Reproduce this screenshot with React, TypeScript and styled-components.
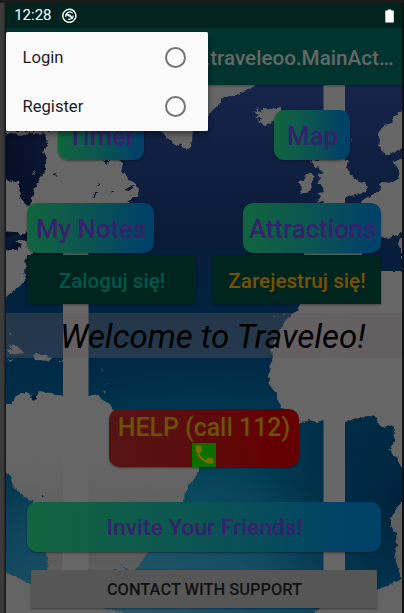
import React from 'react';
import styled, { createGlobalStyle } from 'styled-components';

const GlobalStyle = createGlobalStyle`
  * { box-sizing: border-box; }
  body { margin: 0; overflow: hidden; background: #101010; font-family: Roboto, sans-serif; }
  button { font-family: inherit; }
`;

const Device = styled.div`
  height: 613px;
  width: 404px;
  padding: 3px 2px 0 6px;
  background: linear-gradient(90deg, #3a3a3a 0, #3c3c3c 3px, #222 5px, #111 6px, #111 100%);
  box-shadow: inset 0 3px #1b1b1b;
  overflow: hidden;
`;

const Screen = styled.main`
  position: relative;
  display: flex;
  flex-direction: column;
  height: 610px;
  overflow: hidden;
`;

const StatusBar = styled.header`
  display: flex;
  align-items: center;
  flex: 0 0 25px;
  padding: 0 8px 0 8.2px;
  background: #00231d;
  color: #fff;
  font-size: 15px;
  line-height: 25px;
`;

const StatusIcon = styled.svg`
  width: 15px;
  height: 15px;
  margin-left: 10.6px;
`;

const Battery = styled.svg`
  width: 9px;
  height: 14px;
  margin-left: auto;
`;

const AppBar = styled.div`
  position: relative;
  display: flex;
  align-items: center;
  justify-content: flex-end;
  flex: 0 0 57px;
  padding: 2px 8.5px 0 0;
  background: #00352f;
  box-shadow: 0 1px 2px rgba(0, 0, 0, 0.35);
  z-index: 1;
  color: #676767;
  font-size: 20.65px;
  font-weight: 500;
  white-space: nowrap;
`;

const Content = styled.section`
  position: relative;
  display: flex;
  flex-direction: column;
  flex: 0 0 528px;
  background:
    radial-gradient(ellipse 270px 170px at 130px 535px, rgba(50, 92, 112, 0.85), rgba(30, 80, 100, 0) 100%),
    radial-gradient(ellipse 210px 150px at 195px 425px, rgba(0, 74, 94, 0.75), rgba(0, 66, 88, 0) 100%),
    linear-gradient(180deg, #16244a 0, #0f1f40 80px, #0b1c3a 150px, #02203c 200px, #002a46 280px, #003049 330px, #00344d 400px, #003c55 450px, #003d56 528px);
`;

const WorldMap = styled.svg`
  position: absolute;
  inset: 0;
  width: 396px;
  height: 528px;
`;

const Row = styled.div<{ $top: number; $left: number; $right: number }>`
  position: relative;
  display: flex;
  justify-content: space-between;
  margin: ${p => p.$top}px ${p => p.$right}px 0 ${p => p.$left}px;
`;

const GradientButton = styled.button<{ $width: number; $size?: number }>`
  width: ${p => p.$width}px;
  height: 50px;
  padding: 2px 0 0 1px;
  border: 0;
  border-radius: 10px;
  background: linear-gradient(90deg, #11653d, #0b5452 50%, #004168 92%);
  box-shadow: 0 1px 2px rgba(0, 0, 0, 0.4);
  color: #37206c;
  font-size: ${p => p.$size ?? 25.8}px;
  font-weight: 500;
  white-space: nowrap;
`;

const AuthButton = styled.button<{ $color: string }>`
  width: 169px;
  height: 49px;
  padding: 2px 0 0 1px;
  border: 0;
  background: #00251e;
  box-shadow: 0 1px 2px rgba(0, 0, 0, 0.35);
  color: ${p => p.$color};
  font-size: 20.7px;
  font-weight: 500;
`;

const Welcome = styled.h1`
  position: relative;
  height: 45px;
  margin: 9px 0 0;
  padding-left: 54px;
  background: rgba(97, 87, 91, 0.37);
  color: #000;
  font-size: 33px;
  font-style: italic;
  font-weight: 400;
  line-height: 48px;
  white-space: nowrap;
`;

const HelpButton = styled.button`
  position: relative;
  display: flex;
  flex-direction: column;
  align-items: center;
  align-self: flex-start;
  width: 190px;
  height: 58px;
  margin: 51.4px 0 0 103px;
  padding: 4px 0 0;
  border: 0;
  border-radius: 10px;
  background: linear-gradient(90deg, #551414, #5c0c0e 45%, #660000 90%);
  box-shadow: 0 1px 2px rgba(0, 0, 0, 0.4);
  color: #6b5206;
  font-size: 24.9px;
  font-weight: 500;
  line-height: 29.6px;
  white-space: nowrap;
`;

const PhoneIcon = styled.svg`
  width: 24.5px;
  height: 24px;
  flex: none;
  background: #0d6e00;
`;

const SupportButton = styled.button`
  position: relative;
  height: 38px;
  margin: 18.5px 25px 0;
  padding: 1px 0 0 1px;
  border: 0;
  border-radius: 1px;
  background: #565656;
  box-shadow: 0 1px 2px rgba(0, 0, 0, 0.4);
  color: #111;
  font-size: 16.45px;
  font-weight: 500;
`;

const Menu = styled.ul`
  position: absolute;
  z-index: 2;
  top: 29px;
  left: 0;
  width: 202px;
  height: 99px;
  margin: 0;
  padding: 0;
  border-radius: 1.5px;
  background: #fafafa;
  box-shadow: 0 3px 6px rgba(0, 0, 0, 0.45);
  list-style: none;
`;

const MenuItem = styled.li`
  display: flex;
  align-items: center;
  justify-content: space-between;
  height: 49.5px;
  padding: 1px 22px 0 16.5px;
  color: #1d1d1d;
  font-size: 16.6px;
`;

const Radio = styled.span`
  width: 21px;
  height: 21px;
  border: 2px solid #757575;
  border-radius: 50%;
`;

const land = [
  // North America
  'M0 131 L44 131 43 134 30 133 20 136 12 133 0 136Z',
  'M44 131 L50 131 60 128 145 120 140 136 128 150 119 160 123 163 121 172 126 173 128 180 135 183 139 190 137 197 131 202 127 206 60 215 24 212 31 202 34 190 39 180 46 170 46 158 43 152 48 143Z',
  'M0 180 L19 181 20 198 25 204 32 208 28 231 20 235 15 232 0 231Z',
  'M14 241 L23 240 40 245 34 252 27 259 24 261 27 267 24 271 26 279 20 286 13 291 6 297 0 300 0 254 12 249 17 250 22 244Z',
  // Greenland
  'M160 80 L262 80 253 87 240 94 232 96 224 97 220 103 214 109 207 116 203 130 193 131 192 140 189 149 183 148 180 144 176 146 171 141 166 137 161 130Z',
  // Iceland
  'M252 111 L258 112 256 107 259 109 260 113 264 108 272 109 281 107 281 113 276 120 270 123 265 125 258 121 262 118 255 118 259 115Z',
  // Scandinavia and the continent
  'M410 102 L402 110 394 117 392 123 384 125 381 130 377 133 380 140 379 146 383 152 388 155 394 153 402 148 410 147Z',
  'M410 154 L398 160 394 162 396 167 399 170 398 179 391 183 383 182 379 184 381 190 374 194 364 199 361 204 363 238 382 237 388 239 393 236 398 235 402 232 410 230Z',
  'M400 238 L410 240 410 261 401 258 401 250 398 244Z',
  // Great Britain and Ireland
  'M313 160 L348 160 346 168 350 172 353 177 357 180 364 182 368 187 364 193 356 195 345 197 330 199 317 203 321 196 317 193 325 192 322 186 317 183 321 178 317 174 323 172 318 167 314 169Z',
  'M305 175 L312 174 315 177 311 183 312 189 306 193 299 195 302 189 299 182 304 180Z',
  'M304 251 H363 V256 H304Z',
  // Africa
  'M410 271 L381 271 370 290 300 303 297 311 290 316 285 321 281 328 276 336 274 345 271 351 273 357 270 366 268 377 271 387 276 393 279 402 284 411 299 424 309 420 316 422 324 420 345 422 354 419 360 418 369 416 376 417 379 425 385 428 393 425 395 431 394 442 390 450 396 458 402 468 410 476Z',
  'M410 496 L402 502 396 508 394 514 391 518 391 526 396 534 397 545 395 555 397 565 402 580 410 580Z',
  // South America
  'M0 404 L12 404 16 396 26 392 31 394 34 399 39 391 50 393 63 396 88 396 98 394 101 399 110 404 114 411 140 420 199 465 199 472 192 482 185 491 183 504 170 530 153 546 147 554 143 560 136 569 128 570 119 563 125 570 47 571 48 561 45 550 38 520 33 502 20 493 13 486 10 476 6 473 0 462Z',
  // Antarctica
  'M0 569 L31 584 60 598 102 608 122 612 130 620 0 620Z',
  'M410 576 L377 590 345 603 321 608 300 620 410 620Z',
];

const lakes = 'M31 396 l6 -1 0 4 -4 2Z M52 174 l4 -1 1 3Z M55 181 l4 2Z M92 197 l3 -5 2 0 -3 6Z M97 187 l2 -5 0 5Z M103 161 l6 0 -2 3Z M111 191 l3 0 0 2Z M124 190 l9 -5 2 1 -8 5Z M127 202 l7 -5 5 0 -5 5Z M41 494 l5 4 -4 -1Z M8 237 l12 -3 3 4 -9 4 -8 8 0 -9Z';
const islands = 'M32 174 l3 -3 0 4Z M7 344 l5 2 5 0 7 7 -5 0 -6 -3Z M7 349 l8 2 8 3 -7 1 -8 -3Z M33 354 l10 0 9 4 -3 3 -14 -1Z M7 360 l8 0 -4 2Z M57 360 l6 0 0 2Z M9 333 h2 v2Z M102 369 l1 1 0 3Z M104 377 h1 v3Z M108 383 h1 v1Z M103 391 h2 v3Z M273 316 h3 v1Z M282 314 h3 v1Z M385 135 l3 0 0 2Z M311 159 l2 4 -3 -1Z M351 139 h2 v3Z';

function MapBackground() {
  return (
    <WorldMap viewBox="6 85 396 528">
      <defs>
        <filter id="coast" x="-5%" y="-5%" width="110%" height="110%" colorInterpolationFilters="sRGB">
          <feTurbulence type="fractalNoise" baseFrequency="0.25" numOctaves="2" seed="4" />
          <feDisplacementMap in="SourceGraphic" scale="4" xChannelSelector="R" yChannelSelector="G" />
        </filter>
        <linearGradient id="sheen" gradientUnits="userSpaceOnUse" x1="0" y1="85" x2="0" y2="613">
          <stop offset="0" stopColor="#666" />
          <stop offset="0.7" stopColor="#666" />
          <stop offset="0.9" stopColor="#5b5b5b" />
          <stop offset="0.93" stopColor="#636363" />
          <stop offset="1" stopColor="#646464" />
        </linearGradient>
        <radialGradient id="deep" gradientUnits="userSpaceOnUse" cx="402" cy="500" r="150">
          <stop offset="0" stopColor="#00233d" />
          <stop offset="1" stopColor="#00233d" stopOpacity="0" />
        </radialGradient>
        <linearGradient id="shade" x1="0" y1="0" x2="1" y2="0">
          <stop offset="0" stopColor="#030b1d" stopOpacity="0.75" />
          <stop offset="1" stopColor="#030b1d" stopOpacity="0" />
        </linearGradient>
      </defs>
      <rect x="6" y="85" width="100" height="170" fill="url(#shade)" />
      <rect x="250" y="350" width="152" height="263" fill="url(#deep)" />
      <g filter="url(#coast)">
        {land.map(d => <path key={d} d={d} fill="url(#sheen)" />)}
        <path d={islands} fill="#666" />
        <path d={lakes} fill="#071a33" />
      </g>
      <rect x="63" y="250" width="25.5" height="320" fill="#676767" />
      <rect x="323.5" y="85" width="21.5" height="36" fill="#676767" />
      <rect x="323.5" y="155" width="21.5" height="60" fill="#676767" />
      <rect x="323.5" y="310" width="21.5" height="260" fill="#676767" />
    </WorldMap>
  );
}

export default function App() {
  return (
    <Device>
      <GlobalStyle />
      <Screen>
        <StatusBar>
          12:28
          <StatusIcon viewBox="0 0 15 15" fill="none" stroke="#fff">
            <path d="M11.6 12.7A6.5 6.5 0 1 1 13.2 10.6Z" strokeWidth="1.4" strokeLinejoin="round" />
            <path d="M4 8.8A3.8 3.8 0 0 1 10.6 5.4M4.6 6.3L10.8 10.5M11.2 7.4A3.8 3.8 0 0 1 6 11" strokeWidth="1.2" />
            <path d="M4.5 6.2C6 4.8 7 6.8 8.3 6.4L10.7 9.8Z" fill="#fff" stroke="none" />
          </StatusIcon>
          <Battery viewBox="0 0 9 14">
            <path d="M2.8 0.5H6.2V1.6H8.2Q8.8 1.6 8.8 2.2V13Q8.8 13.6 8.2 13.6H0.9Q0.3 13.6 0.3 13V2.2Q0.3 1.6 0.9 1.6H2.8Z" fill="#fff" />
          </Battery>
        </StatusBar>
        <AppBar>.traveleoo.MainAct…</AppBar>
        <Content>
          <MapBackground />
          <Row $top={25} $left={51.5} $right={51.7}>
            <GradientButton $width={86.5}>Timer</GradientButton>
            <GradientButton $width={76.5}>Map</GradientButton>
          </Row>
          <Row $top={43} $left={20.7} $right={20.7}>
            <GradientButton $width={127.8}>My Notes</GradientButton>
            <GradientButton $width={138.3}>Attractions</GradientButton>
          </Row>
          <Row $top={2} $left={21} $right={21}>
            <AuthButton $color="#00574b">Zaloguj się!</AuthButton>
            <AuthButton $color="#7a5200">Zarejestruj się!</AuthButton>
          </Row>
          <Welcome>Welcome to Traveleo!</Welcome>
          <HelpButton>
            HELP (call 112)
            <PhoneIcon viewBox="0 0 24 24">
              <path
                transform="translate(.2 -.2)"
                fill="#7a6e00"
                d="M6.62 10.79c1.44 2.83 3.76 5.14 6.59 6.59l2.2-2.2c.27-.27.67-.36 1.02-.24 1.12.37 2.33.57 3.57.57.55 0 1 .45 1 1V20c0 .55-.45 1-1 1-9.39 0-17-7.61-17-17 0-.55.45-1 1-1h3.5c.55 0 1 .45 1 1 0 1.25.2 2.45.57 3.57.11.35.03.74-.25 1.02l-2.2 2.2z"
              />
            </PhoneIcon>
          </HelpButton>
          <Row $top={34.3} $left={21} $right={21}>
            <GradientButton $width={354} $size={22.8}>Invite Your Friends!</GradientButton>
          </Row>
          <SupportButton>CONTACT WITH SUPPORT</SupportButton>
        </Content>
        <Menu>
          <MenuItem>Login<Radio /></MenuItem>
          <MenuItem>Register<Radio /></MenuItem>
        </Menu>
      </Screen>
    </Device>
  );
}
